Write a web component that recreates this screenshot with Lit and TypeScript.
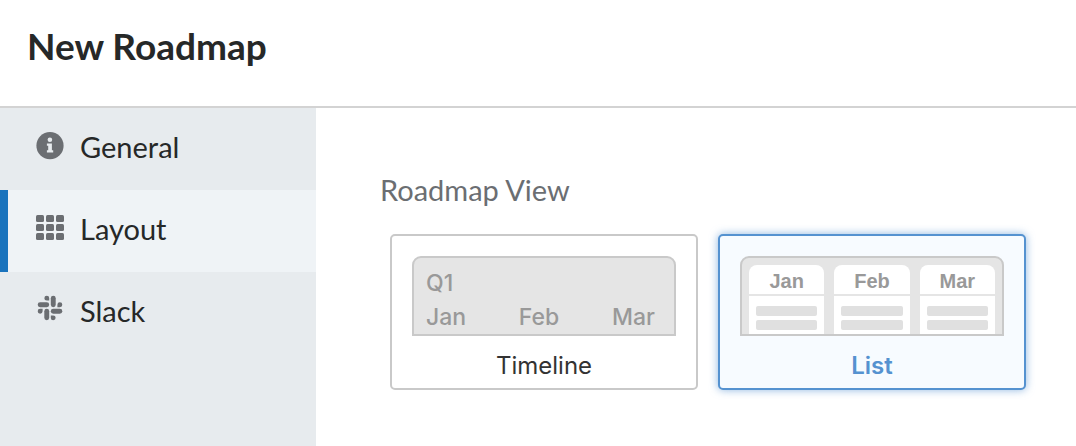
import { LitElement, html, css, svg } from "lit";
import { customElement, property, state } from "lit/decorators.js";
import { classMap } from "lit/directives/class-map.js";

const infoIcon = svg`
  <circle cx="14" cy="13.7" r="13.6" />
  <g fill="#e7ebee">
    <circle cx="13.9" cy="7.7" r="2.3" />
    <path d="M10.9 11.4h5v6.9h1.3v2.3h-6.3v-2.3h1.3v-4.6h-1.3z" />
  </g>`;

const gridIcon = [1, 10, 19].map((y) =>
  [0, 10, 20].map((x) => svg`<rect x=${x} y=${y} width="8" height="7" rx="1.5" />`)
);

const slackArm = svg`
  <path d="M10.8 -0.3a2.4 2.4 0 0 1 2.4 2.4v2.5h-2.4a2.4 2.4 0 0 1 0-4.9z" />
  <rect x="1.7" y="6.3" width="11.5" height="4.9" rx="2.45" />`;
const slackIcon = [0, 90, 180, 270].map(
  (turn) => svg`<g transform="rotate(${turn} 14 12)">${slackArm}</g>`
);

const MONTHS = ["Jan", "Feb", "Mar"];
const SECTIONS = [
  { id: "general", label: "General", icon: infoIcon },
  { id: "layout", label: "Layout", icon: gridIcon },
  { id: "slack", label: "Slack", icon: slackIcon },
];

@customElement("timeline-preview")
export class TimelinePreview extends LitElement {
  static styles = css`
    :host {
      display: block;
      box-sizing: border-box;
      height: 80px;
      padding: 8px 19px 0 12px;
      border: 2px solid #c9c9c9;
      border-radius: 9px 9px 0 0;
      background: #e5e5e5;
      color: #999;
      font: 500 23px/34px Inter, "Liberation Sans", sans-serif;
    }
    .months {
      display: flex;
      justify-content: space-between;
    }
  `;
  render() {
    return html`
      <div>Q1</div>
      <div class="months">${MONTHS.map((m) => html`<span>${m}</span>`)}</div>
    `;
  }
}

@customElement("list-preview")
export class ListPreview extends LitElement {
  static styles = css`
    :host {
      display: grid;
      grid-template-columns: repeat(3, 1fr);
      gap: 10px;
      box-sizing: border-box;
      height: 80px;
      padding: 7px 7px 0;
      border: 2px solid #c9c9c9;
      border-radius: 9px 9px 0 0;
      background: #e5e5e5;
    }
    .column {
      border-radius: 8px 8px 0 0;
      background: #fff;
    }
    .month {
      height: 29px;
      border-bottom: 2px solid #e5e5e5;
      color: #999;
      font: bold 20px/33px "Liberation Sans", Arial, sans-serif;
      text-align: center;
    }
    .bar {
      height: 10px;
      margin: 10px 7px -6px;
      border-radius: 2px;
      background: #e0e0e0;
    }
  `;
  render() {
    return MONTHS.map(
      (m) => html`
        <div class="column">
          <div class="month">${m}</div>
          <div class="bar"></div>
          <div class="bar"></div>
        </div>
      `
    );
  }
}

@customElement("app-root")
export class AppRoot extends LitElement {
  @property() section = "layout";
  @state() private view = "list";

  static styles = css`
    :host {
      display: flex;
      flex-direction: column;
      min-height: 100vh;
      background: #fff;
      color: #262828;
      font-family: Lato, "Open Sans", sans-serif;
    }
    .header {
      padding: 22px 27px 36px;
      border-bottom: 2px solid #d3d3d3;
    }
    .title {
      margin: 0;
      font-size: 37px;
      line-height: 48px;
      font-weight: 700;
    }
    .body {
      display: flex;
      flex: 1;
    }
    .sidebar {
      flex: none;
      width: 316px;
      background: #e7ebee;
    }
    .item {
      display: flex;
      align-items: center;
      gap: 16px;
      box-sizing: border-box;
      height: 82px;
      padding: 0 28px 6px;
      border-left: 8px solid transparent;
      color: inherit;
      font-size: 29px;
      text-decoration: none;
    }
    .item.active {
      border-left-color: #1a73bd;
      background: #eff3f6;
    }
    .icon {
      overflow: visible;
      width: 28px;
      height: 28px;
      fill: #6b6e72;
    }
    .content {
      flex: 1;
      padding: 64px 50px 56px 64px;
    }
    .views {
      margin: 0;
      padding: 0;
      border: 0;
    }
    .legend {
      padding: 0;
      color: #6b6e72;
      font-size: 29px;
      line-height: 36px;
    }
    .cards {
      display: flex;
      flex-wrap: wrap;
      gap: 20px;
      margin: 26px 0 0 10px;
    }
    .card {
      flex: 0 1 308px;
      box-sizing: border-box;
      padding: 20px 20px 4px;
      border: 2px solid #c9c9c9;
      border-radius: 5px;
      color: #333;
      font: 24px/36px Inter, "Liberation Sans", sans-serif;
      text-align: center;
      cursor: pointer;
    }
    .card.selected {
      border-color: #5592d0;
      background: #f7fbff;
      box-shadow: 0 0 8px #5592d0aa;
      color: #5592d0;
      font-weight: 600;
    }
    .radio {
      position: absolute;
      opacity: 0;
      pointer-events: none;
    }
    .preview {
      margin-bottom: 12px;
      text-align: left;
    }
    .name {
      display: block;
    }
  `;

  private card(id: string, label: string, preview: unknown) {
    return html`
      <label class=${classMap({ card: true, selected: this.view === id })}>
        <input
          class="radio"
          type="radio"
          name="view"
          value=${id}
          .checked=${this.view === id}
          @change=${() => (this.view = id)}
        />
        ${preview}
        <span class="name">${label}</span>
      </label>
    `;
  }

  render() {
    return html`
      <header class="header"><h1 class="title">New Roadmap</h1></header>
      <div class="body">
        <nav class="sidebar">
          ${SECTIONS.map(
            (s) => html`
              <a
                class=${classMap({ item: true, active: this.section === s.id })}
                href="#${s.id}"
                @click=${() => (this.section = s.id)}
              >
                <svg class="icon" viewBox="0 0 28 28" aria-hidden="true">${s.icon}</svg>
                <span>${s.label}</span>
              </a>
            `
          )}
        </nav>
        <main class="content">
          <fieldset class="views">
            <legend class="legend">Roadmap View</legend>
            <div class="cards">
              ${this.card("timeline", "Timeline", html`<timeline-preview class="preview"></timeline-preview>`)}
              ${this.card("list", "List", html`<list-preview class="preview"></list-preview>`)}
            </div>
          </fieldset>
        </main>
      </div>
    `;
  }
}
